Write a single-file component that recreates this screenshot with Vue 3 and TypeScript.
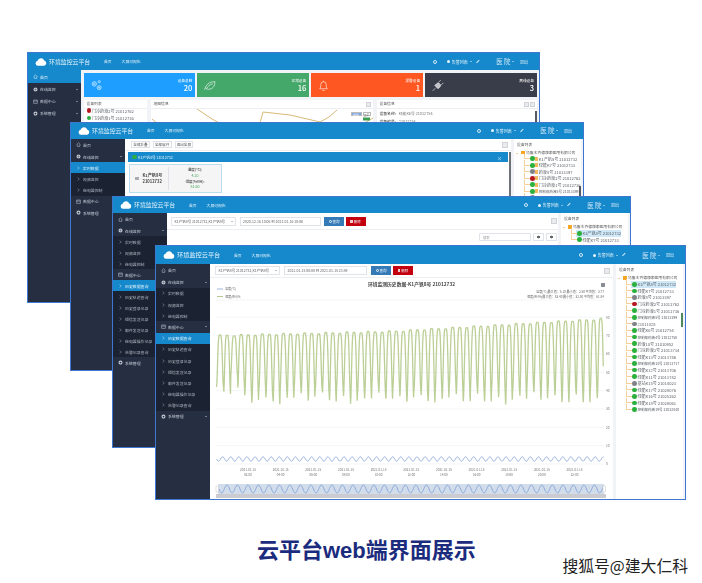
<script setup lang="ts">
type Row = { label: string; kind: 'top' | 'sub'; icon?: string; active?: boolean; open?: boolean }
type Dev = { label: string; state: 'on' | 'off' | 'alarm'; sel?: boolean }

const top = (label: string, icon: string, open = false, active = false): Row => ({ label, kind: 'top', icon, open, active })
const sub = (label: string, active = false): Row => ({ label, kind: 'sub', active })

const monitorSubs = (active = false) => [sub('实时数据', active), sub('视频监控'), sub('继电器控制')]
const historySubs = [
  sub('历史数据查询', true), sub('历史轨迹查询'), sub('历史登录记录'), sub('短信发送记录'),
  sub('邮件发送记录'), sub('继电器操作记录'), sub('告警记录查询'),
]

const windows: { id: string; rows: Row[] }[] = [
  { id: 'w1', rows: [top('首页', 'home', false, true), top('在线监控', 'globe'), top('数据中心', 'cal'), top('系统管理', 'gear')] },
  { id: 'w2', rows: [top('首页', 'home'), top('在线监控', 'globe', true), ...monitorSubs(true), top('数据中心', 'cal'), top('系统管理', 'gear')] },
  { id: 'w3', rows: [top('首页', 'home'), top('在线监控', 'globe', true), ...monitorSubs(), top('数据中心', 'cal', true), ...historySubs, top('系统管理', 'gear')] },
  { id: 'w4', rows: [top('首页', 'home'), top('在线监控', 'globe', true), ...monitorSubs(), top('数据中心', 'cal', true), ...historySubs, top('系统管理', 'gear')] },
]

const stats = [
  { label: '设备总数', value: '20', cls: 'blue', icon: 'gears' },
  { label: '正常设备', value: '16', cls: 'green', icon: 'leaf' },
  { label: '报警设备', value: '1', cls: 'orange', icon: 'bell' },
  { label: '离线设备', value: '3', cls: 'dark', icon: 'plug' },
]

const devices: Dev[] = [
  { label: 'K1产钒8号 21012732', state: 'on', sel: true },
  { label: '绿能K7号 21012733', state: 'on' },
  { label: '药液8号 21013397', state: 'off' },
  { label: '门冷药液2号 21012762', state: 'alarm' },
  { label: '门冷药液1号 21012736', state: 'on' },
  { label: '控制部药液5号 21013399', state: 'on' },
  { label: '21011028', state: 'off' },
  { label: '绿能K6号 21012754', state: 'on' },
  { label: '控制部药液4号 21012750', state: 'on' },
  { label: '药液10号 21010952', state: 'on' },
  { label: '门冷药液3号 21013734', state: 'on' },
  { label: '绿能K13号 21013746', state: 'on' },
  { label: '控制部药液14号 21013717', state: 'on' },
  { label: '绿能K12号 21013706', state: 'on' },
  { label: '绿能K11号 21013742', state: 'on' },
  { label: '基站K15号 21014023', state: 'off' },
  { label: '绿能K17号 21028076', state: 'on' },
  { label: '绿能K16号 21025262', state: 'on' },
  { label: '绿能K18号 21028061', state: 'on' },
  { label: '控制部药液19号 21032840', state: 'on' },
]

const w2Devices = devices.slice(0, 7)
const w3Devices = devices.slice(0, 2)
const w1Devices: Dev[] = [
  { label: '门冷药液2号 21012762', state: 'alarm' },
  { label: '门冷药液1号 21012736', state: 'on' },
]

const isLong = (d: Dev) => d.label.length >= 16

const dateLabels = ['02:00', '04:00', '06:00', '08:00', '10:00', '12:00', '14:00', '16:00', '18:00', '20:00', '22:00']
  .map((t, i) => ({ t, x: 249 + 32.65 * i }))
const yTicks = [0, 10, 20, 30, 40, 50, 60, 70, 80].map(v => ({ v, y: 462 - v * 1.835 }))

function greenPath(): string {
  const pts: string[] = []
  const x0 = 217.5
  const x1 = 604.5
  const period = 7.05
  for (let x = x0; x <= x1; x += 0.35) {
    const n = (x - x0) / period
    const k = Math.floor(n)
    const ph = n - k
    const t = (x - x0) / (x1 - x0)
    const peak = t < 0.45 ? 333 - t * 9 : 329 - (t - 0.45) * 23
    const jitter = ((k * 37) % 11) / 11
    let trough = 385 + jitter * 18
    if (k === 2) trough = 373
    const s = Math.abs(Math.cos(Math.PI * ph))
    const y = peak + (trough - peak) * Math.pow(s, 5) + (k % 3) * 0.6
    pts.push(`${x.toFixed(2)},${y.toFixed(1)}`)
  }
  return 'M' + pts.join('L')
}

function wave(x0: number, x1: number, mid: number, amp: number, period: number): string {
  const pts: string[] = []
  for (let x = x0; x <= x1; x += 0.5) {
    pts.push(`${x.toFixed(1)},${(mid + amp * Math.sin(((x - x0) / period) * 2 * Math.PI)).toFixed(1)}`)
  }
  return 'M' + pts.join('L')
}

const green = greenPath()
const blue = wave(217.5, 604.5, 457, 2.2, 8.1)
const zoomWave = wave(220, 604, 487, 4, 10.5)
</script>

<template>
  <div class="page">
    <div class="desk">
      <section v-for="w in windows" :key="w.id" class="win" :class="w.id">
        <header class="head">
          <svg class="cloud" viewBox="0 0 24 16"><path d="M6 15.5a5 5 0 0 1-.8-9.9A7 7 0 0 1 18.4 5 5.4 5.4 0 0 1 18.5 15.5z" fill="#fff" /></svg>
          <span class="brand">环境监控云平台</span>
          <nav class="nav"><span>首页</span><span>大屏可视化</span></nav>
          <div class="tools">
            <span class="ring"></span>
            <span class="alert"><i></i>告警列表<b></b></span>
            <span class="pen"></span>
            <span class="org">医 院<b></b></span>
            <span class="quit">退出</span>
          </div>
        </header>
        <div class="body">
          <aside class="side">
            <div v-for="r in w.rows" :key="r.label" class="row" :class="[r.kind, { active: r.active }]">
              <svg v-if="r.kind === 'sub'" class="chev" viewBox="0 0 6 8"><path d="M1.5 1l3 3-3 3" fill="none" stroke="currentColor" stroke-width="1" /></svg>
              <svg v-else class="ico" viewBox="0 0 12 12">
                <path v-if="r.icon === 'home'" d="M1.5 6.2 6 1.8l4.5 4.4M3 5.5v5h6v-5" fill="none" stroke="currentColor" stroke-width="1.2" />
                <g v-else-if="r.icon === 'globe'"><circle cx="6" cy="6" r="4.8" fill="currentColor" /><path d="M1 6h10M6 1v10" stroke="#262f42" stroke-width=".7" /></g>
                <path v-else-if="r.icon === 'cal'" d="M1.5 2.5h9v8h-9zM1.5 5h9" fill="none" stroke="currentColor" stroke-width="1.2" />
                <g v-else><circle cx="6" cy="6" r="3.4" fill="none" stroke="currentColor" stroke-width="2.6" /></g>
              </svg>
              <span>{{ r.label }}</span>
              <i v-if="r.kind === 'top' && r.icon !== 'home'" class="caret" :class="{ up: r.open }"></i>
            </div>
          </aside>

          <!-- window 1: dashboard -->
          <div v-if="w.id === 'w1'" class="dash">
            <div class="stats">
              <div v-for="s in stats" :key="s.label" class="stat" :class="s.cls">
                <svg class="stat-ico" viewBox="0 0 24 24" fill="none" stroke="#ffffffb0" stroke-width="1.6">
                  <g v-if="s.icon === 'gears'"><circle cx="8" cy="9" r="4" /><circle cx="8" cy="9" r="1.4" /><circle cx="17" cy="16" r="3.6" /><circle cx="17" cy="16" r="1.2" /><circle cx="17" cy="5" r="2" /></g>
                  <path v-else-if="s.icon === 'leaf'" d="M3 20C5 10 12 5 22 5c0 9-5 14-12 14-2 0-4-1-5-2M6 18c3-5 7-8 12-9" />
                  <path v-else-if="s.icon === 'bell'" d="M5 18c2-2 2-4 2-8a5 5 0 0 1 10 0c0 4 0 6 2 8zM10 21h4M12 3v2" />
                  <path v-else d="M3 22l5-5M7 12l6 6 3-3c2-2 2-4 1-5l-2-2c-1-1-3-1-5 1zM14 6l4-4M19 11l4-4" fill="#ffffffb0" />
                </svg>
                <div class="stat-txt"><small>{{ s.label }}</small><strong>{{ s.value }}</strong></div>
              </div>
            </div>
            <div class="panels">
              <div class="panel plist">
                <div class="ptitle">设备列表</div>
                <div class="tree w1tree">
                  <div v-for="d in w1Devices" :key="d.label" class="dev"><i class="dot" :class="d.state"></i><span>{{ d.label }}</span></div>
                </div>
              </div>
              <div class="panel pmap">
                <div class="ptitle">地图信息<em class="mini"></em></div>
                <div class="map">
                  <svg viewBox="0 0 222 22" preserveAspectRatio="none">
                    <path d="M1 10 7 15M46 0 61 10 72 16M109 14 112 3 139 6 169 13 178 8 186 1M210 16 222 9" fill="none" stroke="#d9b978" stroke-width="1" />
                    <rect x="212" y="8.5" width="7" height="3" fill="#3c9f52" />
                  </svg>
                  <span class="mapbtn on">地图</span><span class="mapbtn">卫星</span>
                </div>
              </div>
              <div class="panel pinfo">
                <div class="ptitle">设备信息<em class="mini m2"></em><em class="mini"></em></div>
                <div class="info"><p><b>设备名称:</b>绿能K6号 21012754</p><p><b>设备编号:</b>21012754</p></div>
                <i class="info-scroll"></i>
              </div>
            </div>
          </div>

          <!-- window 2: realtime -->
          <div v-else-if="w.id === 'w2'" class="split">
            <div class="pane">
              <div class="bar">
                <span class="chip">全部折叠</span><span class="chip">全部展开</span><span class="chip">退出全屏</span>
                <em class="mini right"></em>
              </div>
              <div class="tab"><i class="dot on flat"></i>K1产钒8号 21012732<b>×</b></div>
              <div class="dcard">
                <div class="dleft"><i></i><strong>K1产钒8号<br />21012732</strong></div>
                <div class="dright">
                  <b>温度(℃):</b><span>4.20</span>
                  <b>湿度(%RH):</b><span>81.60</span>
                </div>
              </div>
              <i class="scroll"></i>
            </div>
            <div class="panel side-tree">
              <div class="ptitle">设备列表</div>
              <div class="tree">
                <div class="rootnode"><i class="fold"></i><u></u>乌鲁木齐德康泰医用有限公司</div>
                <div v-for="d in w2Devices" :key="d.label" class="dev" :class="{ long: isLong(d) }"><i class="dot" :class="d.state"></i><u class="tick"></u><span>{{ d.label }}</span></div>
                <i class="tree-scroll dark-scroll"></i>
              </div>
            </div>
          </div>

          <!-- window 3: history table -->
          <div v-else-if="w.id === 'w3'" class="split">
            <div class="pane">
              <div class="query">
                <span class="inp sel">K1产钒8号 21012732,K1产钒8号<b></b></span>
                <span class="inp date">2020-12-16 10:06 到 2021-01-16 10:06</span>
                <span class="btn qb"><i class="mag"></i>查询</span><span class="btn db"><i class="bin"></i>删除</span>
                <em class="mini right"></em>
              </div>
              <div class="tabletools">
                <span class="search">搜索</span><em class="tbtn"></em><em class="tbtn"></em>
              </div>
            </div>
            <div class="panel side-tree">
              <div class="ptitle">设备列表</div>
              <div class="tree">
                <div class="rootnode"><i class="fold"></i><u></u>乌鲁木齐德康泰医用有限公司</div>
                <div v-for="d in w3Devices" :key="d.label" class="dev" :class="{ sel: d.sel }"><i class="dot" :class="d.state"></i><span>{{ d.label }}</span></div>
              </div>
            </div>
          </div>

          <!-- window 4: history chart -->
          <div v-else class="split">
            <div class="pane">
              <div class="query">
                <span class="inp sel">K1产钒8号 21012732,K1产钒8号<b></b></span>
                <span class="inp date">2021-01-15 00:00 到 2021-01-15 23:59</span>
                <span class="btn qb"><i class="mag"></i>查询</span><span class="btn db"><i class="bin"></i>删除</span>
                <em class="mini right"></em>
              </div>
              <svg class="chart" viewBox="211 276 403 222">
                <text x="412.5" y="284" class="ctitle" text-anchor="middle">环境监测历史数据-K1产钒8号 21012732</text>
                <rect x="602" y="281" width="4" height="4" fill="#8a8f96" />
                <line x1="218" x2="224" y1="287" y2="287" stroke="#9db4dc" />
                <text x="226" y="288.3" class="small">温度(℃)</text>
                <line x1="218" x2="224" y1="294.5" y2="294.5" stroke="#b5cb8c" />
                <text x="226" y="295.8" class="small">湿度(RH)%</text>
                <text x="605" y="290.5" class="small" text-anchor="end">温度(℃)最大值：5.10 最小值：2.50 平均值：3.77</text>
                <text x="605" y="295.5" class="small" text-anchor="end">湿度(RH%)最大值：83.40 最小值：32.50 平均值：61.84</text>
                <line x1="217" x2="605" y1="298" y2="298" class="grid" />
                <g v-for="t in yTicks" :key="t.v">
                  <line x1="217" x2="605" :y1="t.y" :y2="t.y" class="grid" />
                  <text x="607" :y="t.y + 1.4" class="tick-t">{{ t.v }}</text>
                </g>
                <path :d="green" fill="none" stroke="#bbcf96" stroke-width="1.3" />
                <path :d="blue" fill="none" stroke="#8fa8d8" stroke-width=".9" />
                <g v-for="d in dateLabels" :key="d.t">
                  <text :x="d.x" y="469" class="tick-t" text-anchor="middle">2021-01-15</text>
                  <text :x="d.x" y="473.5" class="tick-t" text-anchor="middle">{{ d.t }}</text>
                </g>
                <rect x="219" y="482" width="386" height="10" fill="#d2ddec" />
                <path :d="zoomWave" fill="none" stroke="#86a3d6" stroke-width=".9" />
                <rect x="217" y="492" width="390" height="4" fill="#cbcbd0" />
                <rect x="217" y="484" width="2.5" height="6" fill="#fff" stroke="#bbb" stroke-width=".4" />
                <rect x="604" y="484" width="2.5" height="6" fill="#fff" stroke="#bbb" stroke-width=".4" />
              </svg>
            </div>
            <div class="panel side-tree">
              <div class="ptitle">设备列表</div>
              <div class="tree full">
                <div class="rootnode"><i class="fold"></i><u></u>乌鲁木齐德康泰医用有限公司</div>
                <div v-for="d in devices" :key="d.label" class="dev" :class="{ sel: d.sel, long: isLong(d) }"><i class="dot" :class="d.state"></i><span>{{ d.label }}</span></div>
                <i class="tree-scroll"></i>
              </div>
            </div>
          </div>
        </div>
      </section>
    </div>
    <footer class="foot">
      <h1>云平台web端界面展示</h1>
      <span class="mark">搜狐号@建大仁科</span>
    </footer>
  </div>
</template>

<style>
html, body { margin: 0; background: #fff; }
</style>

<style scoped>
.page {
  width: 702px;
  height: 583px;
  overflow: hidden;
  background: #fff;
  font-family: "Noto Sans CJK SC", "Noto Sans", sans-serif;
}
.desk { position: relative; height: 530px; }

.win {
  position: absolute;
  box-sizing: border-box;
  display: flex;
  flex-direction: column;
  overflow: hidden;
  border: 1px solid #3d77cf;
  background: #f1f3f6;
  filter: blur(0.45px);
  --head: 17px;
  --side: 54px;
  --row: 11.2px;
  --first: 12.6px;
  --rstep: 6.6px;
  --brand: 42px;
  --brand-size: 5.9px;
}
.w1 { left: 27px; top: 52px; width: 513px; height: 251px; --row: 12px; --first: 13px; --side: 53px; }
.w2 { left: 70px; top: 122px; width: 514px; height: 249px; --head: 15.5px; --side: 54px; --rstep: 6.5px; }
.w3 { left: 112px; top: 196px; width: 519px; height: 252px; --head: 16px; --row: 11px; --first: 12px; --rstep: 6.5px; }
.w4 { left: 155px; top: 245px; width: 531px; height: 255px; --head: 18px; --brand: 44px; --brand-size: 6.2px; }

.head {
  flex: none;
  height: var(--head);
  display: flex;
  align-items: center;
  padding: 0 11px 0 7px;
  background: #1589cb;
  color: #e6f3fb;
}
.cloud { width: 12px; height: 8px; margin-right: 2px; }
.brand { font-size: var(--brand-size); line-height: 1; width: var(--brand); white-space: nowrap; }
.nav { display: flex; gap: 10px; margin-left: 13px; font-size: 3.8px; }
.tools { margin-left: auto; display: flex; align-items: center; font-size: 4px; white-space: nowrap; }
.ring { box-sizing: border-box; width: 4px; height: 4px; border: .8px solid #d3e9f7; border-radius: 50%; margin-right: 10px; }
.alert { display: flex; align-items: center; gap: 1px; margin-right: 4px; }
.alert i { width: 3px; height: 3px; background: #e6f3fb; border-radius: 50%; margin-right: 1px; }
.alert b, .org b {
  width: 0; height: 0; margin-left: 1.5px;
  border: 1.5px solid transparent; border-top-color: #e6f3fb; border-bottom: 0;
}
.pen { width: 4px; height: 1.4px; background: #d3e9f7; transform: rotate(-45deg); margin-right: 16px; }
.org { display: flex; align-items: center; font-size: 6.4px; margin-right: 6px; color: #cfe6f6; }
.quit { font-size: 4px; }

.body { flex: 1; display: flex; min-height: 0; }
.side { flex: none; width: var(--side); background: #262f42; color: #c6ccd6; font-size: 3.9px; }
.row {
  box-sizing: border-box;
  height: var(--row);
  display: flex;
  align-items: center;
  padding-left: 4.5px;
  gap: 2.5px;
  white-space: nowrap;
}
.row:first-child { height: var(--first); }
.row.sub { background: #1b2231; padding-left: 5.5px; gap: 3.5px; color: #aeb5c1; }
.row.active { background: #1589cb; color: #e8f4fc; }
.ico { width: 5px; height: 5px; flex: none; }
.chev { width: 3px; height: 4px; flex: none; }
.caret {
  margin-left: auto; margin-right: 3px;
  width: 0; height: 0;
  border: 1.5px solid transparent; border-top-color: #c6ccd6; border-bottom: 0;
}
.caret.up { border-top: 0; border-bottom: 1.5px solid #c6ccd6; }

/* dashboard */
.dash { flex: 1; padding: 3px 2px 0 2.5px; display: flex; flex-direction: column; gap: 3px; min-width: 0; }
.stats { display: grid; grid-template-columns: repeat(4, 1fr); gap: 2px; height: 24px; flex: none; }
.stat { display: flex; align-items: center; justify-content: space-between; padding: 0 3px 0 6px; color: #fff; }
.stat-ico { width: 13px; height: 13px; }
.stat-txt { display: flex; flex-direction: column; align-items: flex-end; line-height: 1; }
.stat-txt small { font-size: 3.7px; margin-bottom: 1.5px; }
.stat-txt strong { font-size: 7.5px; font-weight: 500; }
.blue { background: #1e9fff; }
.green { background: #45a86b; }
.orange { background: #ff5722; }
.dark { background: #393d49; }
.panels { flex: 1; display: flex; gap: 4px; min-height: 0; }
.panel { background: #fff; font-size: 3.8px; color: #555; overflow: hidden; }
.plist { width: 63px; }
.pmap { width: 222px; }
.pinfo { position: relative; flex: 1; }
.info-scroll { position: absolute; right: 0.5px; top: 11px; width: 1.5px; height: 12px; background: #555a60; }
.ptitle {
  position: relative;
  height: 8px; line-height: 8px; padding-left: 3px;
  border-bottom: 1px solid #eceef1;
  white-space: nowrap;
}
.side-tree .ptitle { height: 10px; line-height: 12px; border-bottom: 1px solid transparent; }
.mini {
  position: absolute; right: 2px; top: 1.5px;
  width: 5px; height: 5px; background: #e9ebee; border: .5px solid #cfd3d8;
  box-sizing: border-box;
}
.mini.m2 { right: 8px; }
.mini.right { right: 3.5px; top: 3.5px; width: 6px; height: 6px; }
.w3 .mini.right { right: 1px; top: 5px; }
.w1tree { padding: 0 0 0 17px; margin-top: -2px; }
.map { position: relative; height: 22px; }
.map svg { width: 100%; height: 100%; display: block; }
.mapbtn {
  position: absolute; top: 2.5px; right: 2px; width: 8px; height: 4.5px;
  font-size: 2.8px; line-height: 4.5px; text-align: center;
  background: #fff; border: .5px solid #bbb; box-sizing: border-box;
}
.mapbtn.on { right: 11px; width: 11px; background: #7ea6e0; color: #fff; }
.info { padding: 2px 0 0 3px; }
.info p { margin: 0 0 2.5px; line-height: 5px; white-space: nowrap; color: #777; }
.info b { font-weight: 500; color: #444; margin-right: 3px; }

/* split layouts */
.split { flex: 1; display: flex; gap: 3px; padding-right: 2px; min-width: 0; }
.pane { position: relative; flex: 1; min-width: 0; display: flex; flex-direction: column; background: #fff; }

.bar {
  position: relative; height: 11.5px; display: flex; align-items: center; gap: 3px;
  padding-left: 6px; border-bottom: 1px solid #eceef1; flex: none;
}
.chip {
  height: 5.5px; line-height: 5.5px; padding: 0 1.2px; font-size: 3.6px; color: #555;
  border: .5px solid #dfe2e6; white-space: nowrap;
}
.tab {
  margin: 1px 3px 0 3px; height: 10px; display: flex; align-items: center; padding-left: 4px;
  font-size: 3.7px; color: #e6f3fb; background: #1589cb; flex: none;
}
.tab b { margin-left: auto; margin-right: 6px; font-weight: 400; font-size: 5px; }
.flat { width: 3.6px; height: 3.6px; margin-right: 1.5px; }
.dcard {
  margin: 2px 0 0 4px; width: 93px; height: 29px; flex: none;
  box-sizing: border-box; display: flex; background: #f5f5f5; border: 1px solid #bcdcf0;
}
.dleft {
  width: 39px; display: flex; align-items: center; gap: 3.5px; padding-left: 5px;
  box-sizing: border-box; font-size: 4.1px; line-height: 5.4px; color: #444;
  border-right: 1px solid #dfe2e6; margin: 2px 0;
}
.dleft i { width: 4px; height: 3px; background: #a9adb3; flex: none; }
.dleft strong { font-weight: 700; white-space: nowrap; }
.dright {
  flex: 1; display: flex; flex-direction: column; align-items: center; justify-content: center;
  font-size: 3.6px; line-height: 5.8px; color: #444;
}
.dright b { font-weight: 500; }
.dright span { color: #46a35a; }
.scroll { position: absolute; right: 0; top: 13px; bottom: 0; width: 2px; background: #6d7278; }

.query {
  position: relative; display: flex; align-items: center; flex: none;
  height: 13px; padding-left: 5px; gap: 4px; border-bottom: 1px solid #eceef1;
}
.w3 .query { height: 16px; padding-left: 4px; gap: 3.5px; }
.inp {
  box-sizing: border-box; height: 9px; display: flex; align-items: center; padding: 0 2.5px;
  border: .5px solid #e0e3e7; font-size: 3.5px; color: #666; white-space: nowrap; overflow: hidden;
}
.sel { width: 65px; flex: none; }
.sel b {
  width: 0; height: 0; margin-left: auto;
  border: 1.2px solid transparent; border-top-color: #888; border-bottom: 0;
}
.date { width: 83px; flex: none; }
.w3 .date { width: 81px; }
.btn {
  flex: none; width: 20px; height: 9px; display: flex; align-items: center; justify-content: center; gap: 1px;
  font-size: 3.5px; color: #f0f6fb;
}
.qb { background: #337ab7; }
.db { background: #c3000e; margin-left: -2px; }
.mag { box-sizing: border-box; width: 3px; height: 3px; border: .6px solid #f0f6fb; border-radius: 50%; }
.bin { width: 2.4px; height: 3px; background: #f0c8cc; }

.tabletools { display: flex; justify-content: flex-end; align-items: center; gap: 2px; padding: 3px 1px 0 0; }
.search {
  box-sizing: border-box; width: 52px; height: 8px; line-height: 7px; padding-left: 3px;
  border: .5px solid #e0e3e7; border-radius: 1px; font-size: 3.3px; color: #999;
}
.tbtn { width: 11px; height: 8px; box-sizing: border-box; border: .5px solid #e0e3e7; background: radial-gradient(circle, #666 0 1.3px, #fff 1.6px); }

.chart { display: block; width: 403px; height: 222px; flex: none; }
.ctitle { font-size: 4.8px; font-weight: 700; fill: #444; }
.small { font-size: 3.1px; fill: #666; }
.tick-t { font-size: 3.1px; fill: #777; }
.grid { stroke: #eef0f4; stroke-width: .7; }

.side-tree { flex: none; width: 67px; }
.tree { position: relative; padding: 0 0 0 2px; }
.rootnode { height: 6px; line-height: 6px; display: flex; align-items: center; gap: 1.5px; font-size: 3.8px; white-space: nowrap; color: #555; }
.rootnode u { width: 4px; height: 3.6px; background: #f5a623; flex: none; text-decoration: none; }
.fold { width: 0; height: 0; border: 1.2px solid transparent; border-bottom-color: #f0a030; margin-right: 1px; }
.tree .dev {
  position: relative; box-sizing: border-box;
  height: var(--rstep); display: flex; align-items: center; gap: 0.8px;
  margin-left: 13px; padding-left: 1px; white-space: nowrap; font-size: 4.1px; color: #5a5f66; width: max-content;
}
.tree .dev.long { font-size: 3.55px; }
.tree .dev::before {
  content: ""; position: absolute; left: -5px; top: -2px; bottom: 3px; width: 5px;
  border-left: .5px solid #f3cf99; border-bottom: .5px solid #f3cf99;
}
.w1tree .dev { margin-left: 0; height: 7.4px; }
.w1tree .dev::before { display: none; }
.dev.sel { background: #cfe8f8; }
.dot { display: block; width: 4.6px; height: 4.6px; border-radius: 50%; flex: none; }
.dot.on { background: #2bb03e; }
.dot.off { background: #7f8388; }
.dot.alarm { background: #b5191f; }
.tick { width: 2.6px; height: 3.6px; background: #f4b85e; flex: none; text-decoration: none; }
.tree-scroll { position: absolute; right: 0.5px; top: 38px; width: 1.5px; height: 14px; background: #4d8a5a; }
.tree-scroll.dark-scroll { top: 36px; height: 12px; background: #555a60; }

.foot {
  height: 53px; display: flex; align-items: flex-start; padding: 7px 14px 0 257px; box-sizing: border-box;
}
.foot h1 {
  margin: 0; font-size: 22px; line-height: 28px; font-weight: 700; color: #1b2b7d; white-space: nowrap;
  font-family: "Liberation Sans", "Noto Sans CJK SC", sans-serif;
}
.mark {
  margin: 20px 0 0 auto; font-size: 15.8px; line-height: 18px; color: #222; white-space: nowrap;
  text-shadow: 0 0 1px #fff;
}
</style>
